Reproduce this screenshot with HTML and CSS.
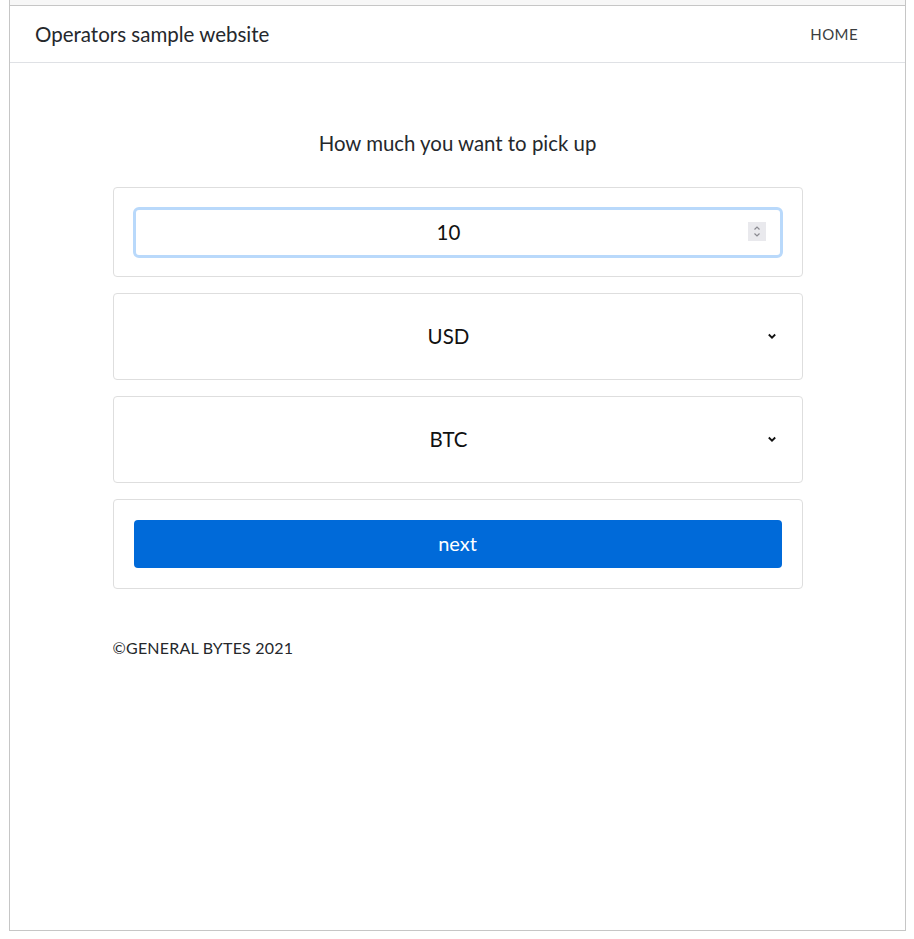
FILE: index.html
```html
<!DOCTYPE html>
<html lang="en">
<head>
<meta charset="utf-8">
<title>Operators sample website</title>
<link rel="stylesheet" href="styles.css">
</head>
<body>
<div class="frame">
  <div class="topstrip"></div>
  <header class="navbar">
    <span class="brand">Operators sample website</span>
    <a class="nav-link" href="#">HOME</a>
  </header>
  <main class="content">
    <h1 class="question">How much you want to pick up</h1>
    <div class="card card-input">
      <div class="input-wrap">
        <input class="amount" type="text" value="10">
        <span class="spinner">
          <svg width="18" height="19" viewBox="0 0 18 19"><path d="M6.5 7.5 L9 5 L11.5 7.5" fill="none" stroke="#8a8a90" stroke-width="1.2"/><path d="M6.5 11.5 L9 14 L11.5 11.5" fill="none" stroke="#8a8a90" stroke-width="1.2"/></svg>
        </span>
      </div>
    </div>
    <div class="card card-select">
      <select class="picker"><option>USD</option></select>
      <svg class="chev" width="10" height="8" viewBox="0 0 10 8"><path d="M1.8 2.5 L5 5.7 L8.2 2.5" fill="none" stroke="#111" stroke-width="1.8"/></svg>
    </div>
    <div class="card card-select">
      <select class="picker"><option>BTC</option></select>
      <svg class="chev" width="10" height="8" viewBox="0 0 10 8"><path d="M1.8 2.5 L5 5.7 L8.2 2.5" fill="none" stroke="#111" stroke-width="1.8"/></svg>
    </div>
    <div class="card card-btn">
      <button class="next" type="button">next</button>
    </div>
    <footer class="footer">©GENERAL BYTES 2021</footer>
  </main>
</div>
</body>
</html>
```
FILE: styles.css
```css
html, body {
  margin: 0;
  padding: 0;
  background: #fff;
}
body {
  font-family: "Lato", "Open Sans", sans-serif;
  color: #212529;
}
.frame {
  margin-left: 9px;
  width: 895px;
  height: 930px;
  border: 1px solid #c6c6c6;
  border-top: none;
  display: flex;
  flex-direction: column;
}
.topstrip {
  height: 5px;
  background: #f7f7f7;
  border-bottom: 1px solid #c6c6c6;
}
.navbar {
  height: 56px;
  border-bottom: 1px solid #dfe1e5;
  display: flex;
  align-items: center;
  justify-content: space-between;
  padding: 0 47px 0 25px;
}
.brand {
  font-size: 20.5px;
  color: #25282c;
  padding-bottom: 1px;
}
.nav-link {
  font-size: 15px;
  color: #3a3d40;
  text-decoration: none;
  letter-spacing: 0.4px;
  padding-bottom: 1px;
}
.content {
  width: 690px;
  margin: 0 auto;
  padding-top: 68px;
  display: flex;
  flex-direction: column;
  gap: 16px;
}
.question {
  margin: 0 0 16px 0;
  font-size: 20.4px;
  font-weight: normal;
  text-align: center;
  color: #25282c;
  height: 24px;
  line-height: 24px;
}
.card {
  border: 1px solid #dedede;
  border-radius: 4px;
  background: #fff;
  position: relative;
}
.card-input {
  padding: 19px 19px 18px 19px;
}
.input-wrap {
  position: relative;
}
.amount {
  display: block;
  box-sizing: border-box;
  width: 100%;
  height: 51px;
  border: 3px solid #b9d9fb;
  border-radius: 6px;
  text-align: center;
  font-family: "Lato", "Open Sans", sans-serif;
  font-size: 20.5px;
  color: #111;
  outline: none;
  padding: 0 18px 2px 0;
}
.spinner {
  position: absolute;
  right: 17px;
  top: 15px;
  width: 18px;
  height: 19px;
  background: #e9e9ed;
  display: block;
}
.spinner svg {
  display: block;
}
.card-select {
  height: 85px;
}
.picker {
  -webkit-appearance: none;
  appearance: none;
  display: block;
  width: 100%;
  height: 85px;
  border: none;
  background: transparent;
  text-align: center;
  text-align-last: center;
  font-family: "Lato", "Open Sans", sans-serif;
  font-size: 20.5px;
  color: #111;
  padding: 0 18px 2px 0;
  outline: none;
}
.chev {
  position: absolute;
  right: 25px;
  top: 38px;
}
.card-btn {
  padding: 20px;
}
.next {
  display: block;
  width: 100%;
  height: 48px;
  border: none;
  border-radius: 4px;
  background: #006ad9;
  color: #fff;
  font-family: "Lato", "Open Sans", sans-serif;
  font-size: 20px;
  padding: 0 0 2px 0;
}
.footer {
  margin-top: 33px;
  font-size: 16px;
  color: #25282c;
  letter-spacing: 0.2px;
}
```
